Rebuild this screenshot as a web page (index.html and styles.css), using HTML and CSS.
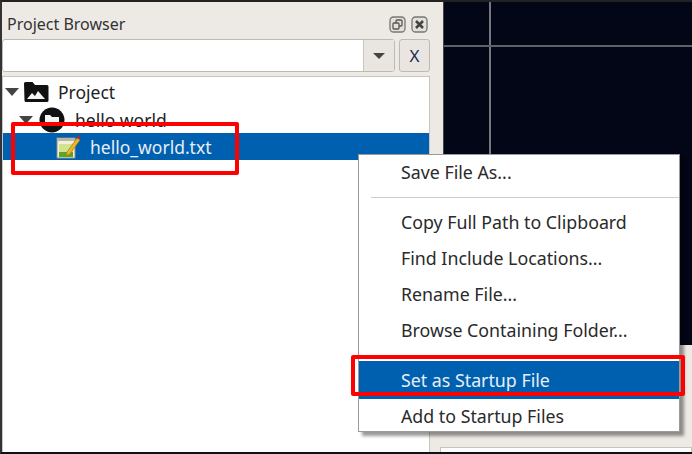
FILE: index.html
```html
<!DOCTYPE html>
<html lang="en">
<head>
<meta charset="utf-8">
<title>Project Browser</title>
<link rel="stylesheet" href="styles.css">
</head>
<body>
<div class="window">
  <section class="panel">
    <header class="titlebar">
      <span class="title">Project Browser</span>
      <span class="dock-btn"><svg width="17" height="17" viewBox="0 0 17 17"><rect x="1" y="1" width="15" height="15" rx="3.500" fill="#e4e1dc" stroke="#77776f" stroke-width="1.300"/><rect x="7" y="4" width="6" height="6" rx="1" fill="none" stroke="#555" stroke-width="1.300"/><rect x="4" y="7" width="6" height="6" rx="1" fill="#e4e1dc" stroke="#555" stroke-width="1.300"/></svg></span>
      <span class="dock-btn"><svg width="17" height="17" viewBox="0 0 17 17"><rect x="1" y="1" width="15" height="15" rx="3.500" fill="#e4e1dc" stroke="#77776f" stroke-width="1.300"/><path d="M5 5l7 7M12 5l-7 7" stroke="#444" stroke-width="2.600"/></svg></span>
    </header>
    <div class="searchrow">
      <div class="combo">
        <div class="combo-input"></div>
        <div class="combo-arrow"><span class="arrow-down"></span></div>
      </div>
      <button class="xbtn">X</button>
    </div>
    <div class="tree">
      <div class="row row-project">
        <span class="caret"></span>
        <svg class="icon" width="26" height="22" viewBox="0 0 26 22"><path d="M1 2.500a1.500 1.500 0 0 1 1.500-1.500h7l2.500 3h12a1.500 1.500 0 0 1 1.500 1.500v14a1.500 1.500 0 0 1-1.500 1.500h-21a1.500 1.500 0 0 1-1.500-1.500z" fill="#111"/><path d="M4 18l5-6 3 3 3-5 7 8z" fill="#f4f4f4"/></svg>
        <span class="label">Project</span>
      </div>
      <div class="row row-folder">
        <span class="caret"></span>
        <svg class="icon" width="26" height="26" viewBox="0 0 26 26"><circle cx="13" cy="13" r="12.500" fill="#111"/><path d="M6 8h5l2 2h7v9H6z" fill="#f4f4f4"/></svg>
        <span class="label">hello world</span>
      </div>
      <div class="row row-file">
        <svg class="icon" width="25" height="24" viewBox="0 0 25 24"><rect x="1" y="3" width="18" height="20" fill="#f2f0dc" stroke="#8c8c80"/><path d="M1 3h18v3H1z" fill="#b5b5a8"/><path d="M3 17h14v5H3z" fill="#5aa52a"/><path d="M3 9h14v8H3z" fill="#cfe48c"/><path d="M11 17L21 3l3 2-10 14-4 2z" fill="#f0b428" stroke="#a06c10" stroke-width=".6"/><circle cx="23" cy="2" r="1.500" fill="#b02828"/></svg>
        <span class="label">hello_world.txt</span>
      </div>
    </div>
  </section>
  <section class="side">
    <div class="canvas"><span class="line-v"></span><span class="line-h"></span></div>
    <div class="side-foot"><div class="side-box"></div></div>
  </section>
  <nav class="menu">
    <div class="menu-item">Save File As...</div>
    <div class="menu-sep first"></div>
    <div class="menu-item">Copy Full Path to Clipboard</div>
    <div class="menu-item">Find Include Locations...</div>
    <div class="menu-item">Rename File...</div>
    <div class="menu-item">Browse Containing Folder...</div>
    <div class="menu-sep second"></div>
    <div class="menu-item active">Set as Startup File</div>
    <div class="menu-item">Add to Startup Files</div>
  </nav>
  <div class="mark mark-file"></div>
  <div class="mark mark-menu"></div>
</div>
</body>
</html>
```
FILE: styles.css
```css
* { box-sizing: border-box; }
html, body { margin: 0; padding: 0; }
body { width: 692px; height: 454px; overflow: hidden; background: #edeae6; font-family: "Noto Sans", "Open Sans", sans-serif; color: #222; }
.window { position: relative; width: 692px; height: 454px; display: flex; border-top: 2px solid #222; border-bottom: 2px solid #111; border-left: 2px solid #333; }
.panel { width: 441px; flex: none; display: flex; flex-direction: column; background: #edeae6; }
.titlebar { height: 37px; flex: none; display: flex; align-items: center; padding: 7px 15px 0 5px; gap: 5px; }
.title { flex: 1; font-size: 16px; color: #333; }
.dock-btn { display: flex; width: 17px; height: 17px; align-items: center; justify-content: center; }
.searchrow { flex: none; display: flex; gap: 4px; height: 33px; padding-right: 13px; }
.combo { flex: 1; display: flex; border: 1px solid #bdbab4; border-radius: 3px; background: #fff; }
.combo-input { flex: 1; }
.combo-arrow { width: 31px; background: #e9e6e1; border-left: 1px solid #c8c5bf; display: flex; align-items: center; justify-content: center; }
.arrow-down { width: 0; height: 0; border-left: 6px solid transparent; border-right: 6px solid transparent; border-top: 6px solid #444; }
.xbtn { width: 31px; padding: 0; background: #e9e6e1; border: 1px solid #bdbab4; border-radius: 3px; font: 17px "Noto Sans", sans-serif; color: #1c2a50; }
.tree { flex: 1; margin: 4px 13px 0 0; background: #fff; border: 1px solid #c8c5bf; border-bottom: 0; padding-top: 1px; }
.row { height: 27px; display: flex; align-items: center; font-size: 17.500px; color: #222; }
.row-project { padding-left: 2px; height: 28px; }
.row-project .caret { margin-right: 4px; }
.row-folder { padding-left: 16px; }
.row-folder .caret { margin-right: 6px; }
.row-file { height: 27px; padding-left: 53px; background: #0060b0; color: #e8eef6; }
.caret { width: 0; height: 0; border-left: 7px solid transparent; border-right: 7px solid transparent; border-top: 8px solid #444; margin-right: 5px; }
.row .icon { flex: none; margin-right: 9px; }
.row-folder .icon { margin-right: 10px; }
.side { flex: 1; display: flex; flex-direction: column; }
.canvas { height: 343px; flex: none; background: #020617; position: relative; border-left: 1px solid #444; }
.line-v { position: absolute; left: 45px; top: 0; bottom: 0; width: 2px; background: #77787e; }
.line-h { position: absolute; left: 0; right: 0; top: 43px; height: 2px; background: #5f6068; }
.side-foot { flex: 1; background: #edeae6; padding: 102px 0 0 0; }
.side-box { height: 5px; margin-left: -3px; background: #fff; border: 1px solid #c8c5bf; border-bottom: 0; }
.menu { position: absolute; left: 356px; top: 152px; width: 322px; height: 278px; background: #fff; border: 1px solid #9a9a9a; box-shadow: 4px 4px 3px rgba(0,0,0,.4); font-size: 17.800px; color: #2a2a2a; }
.menu-item { height: 36px; line-height: 34px; padding-left: 42px; white-space: nowrap; }
.menu-sep { height: 1px; background: #cfcdc9; margin: 0 0 0 12px; }
.menu-sep.first { margin-top: 6px; margin-bottom: 7px; }
.menu-sep.second { margin-top: 6px; margin-bottom: 5px; }
.menu-item.active { height: 38px; line-height: 38px; background: #0060b0; color: #e8eef6; }
.mark { position: absolute; border: 4px solid #f00; border-radius: 2px; }
.mark-file { left: 9px; top: 120px; width: 228px; height: 53px; }
.mark-menu { left: 349px; top: 353px; width: 334px; height: 41px; }
```
